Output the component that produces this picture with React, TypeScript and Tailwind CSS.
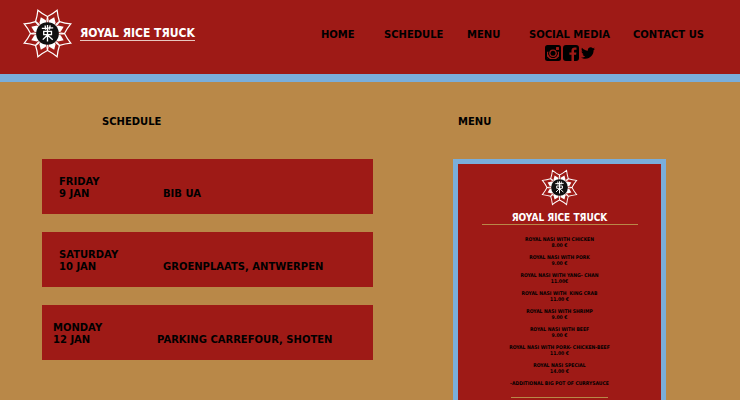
import { FaTwitter } from "react-icons/fa";

const petals = [22.5, 67.5, 112.5, 157.5, 202.5, 247.5, 292.5, 337.5];

function Logo({ className }: { className: string }) {
  return (
    <svg viewBox="-28 -28 56 56" className={className} role="img" aria-label="Royal Rice Truck logo">
      {petals.map((angle) => (
        <g key={angle} transform={`rotate(${angle})`}>
          <path
            d="M-3.8 -9.5 Q-6.6 -13 -6.8 -16.6 Q-3 -21 0 -26.6 Q3 -21 6.8 -16.6 Q6.6 -13 3.8 -9.5"
            fill="none"
            stroke="#fff"
            strokeWidth="1.3"
            strokeLinejoin="miter"
          />
          <path d="M0 -18.5 L3.7 -13.5 L3 -10.5 L-3 -10.5 L-3.7 -13.5Z" fill="#fff" />
        </g>
      ))}
      <circle r="12" fill="#101010" />
      <path
        d="M-6 -5.5L6 -6 M-2.5 -8.5L-2 -4 M2.8 -8.5L2 -4 M0 -9V8.5 M-4 -2.2H4.2V1.2H-4Z M0 1.5L-5 6.5 M0 1.5L5.5 6.5"
        fill="none"
        stroke="#fff"
        strokeWidth="1.4"
      />
    </svg>
  );
}

function InstagramIcon() {
  return (
    <svg viewBox="0 0 16 16" className="size-4" fill="none" aria-hidden="true">
      <rect width="16" height="16" rx="2.5" fill="#000" />
      <path
        d="M2 6.8H3.8A4.5 4.5 0 1 0 12.2 6.8H14V13a1 1 0 0 1-1 1H3a1 1 0 0 1-1-1Z"
        fill="#9e1a16"
      />
      <circle cx="8" cy="8.2" r="4.8" fill="#000" />
      <circle cx="8" cy="8.2" r="3.8" fill="#9e1a16" />
      <circle cx="8" cy="8.2" r="2.5" fill="#000" />
      <path d="M2 11.5V13a1 1 0 0 0 1 1H13a1 1 0 0 0 1-1V11.5L11 14H5Z" fill="#000" />
      <rect x="11" y="2" width="3" height="3" rx="0.5" fill="#9e1a16" />
    </svg>
  );
}

function FacebookIcon() {
  return (
    <svg viewBox="0 0 16 16" className="size-4" aria-hidden="true">
      <path
        d="M3 0H13A3 3 0 0 1 16 3V13A3 3 0 0 1 13 16H11V9.8H13.1L13.4 7.4H11V5.9C11 5.2 11.2 4.7 12.2 4.7H13.5V2.5C13.3 2.5 12.5 2.4 11.6 2.4C9.8 2.4 8.5 3.5 8.5 5.6V7.4H6.4V9.8H8.5V16H3A3 3 0 0 1 0 13V3A3 3 0 0 1 3 0Z"
        fill="#000"
      />
    </svg>
  );
}

const stops = [
  { day: "FRIDAY", date: "9 JAN", place: "BIB UA", pad: "pl-[17px]" },
  { day: "SATURDAY", date: "10 JAN", place: "GROENPLAATS, ANTWERPEN", pad: "pl-[17px]" },
  { day: "MONDAY", date: "12 JAN", place: "PARKING CARREFOUR, SHOTEN", pad: "pl-[11px]" },
];

const dishes = [
  ["ROYAL NASI WITH CHICKEN", "8.00 €"],
  ["ROYAL NASI WITH PORK", "9.00 €"],
  ["ROYAL NASI WITH YANG- CHAN", "11.00€"],
  ["ROYAL NASI WITH  KING CRAB", "11.00 €"],
  ["ROYAL NASI WITH SHRIMP", "9.00 €"],
  ["ROYAL NASI WITH BEEF", "9.00 €"],
  ["ROYAL NASI WITH PORK- CHICKEN-BEEF", "11.00 €"],
  ["ROYAL NASI SPECIAL", "14.00 €"],
];

export default function App() {
  return (
    <div className="flex min-h-screen flex-col bg-[#b98848] font-['DejaVu_Sans',sans-serif] text-[10px] leading-3 font-bold text-black">
      <header className="flex h-[82px] items-start border-b-8 border-[#7aaedb] bg-[#9e1a16] pr-8 pl-[21px]">
        <a href="#home" className="flex items-start gap-[6px] pt-[7px] text-white">
          <Logo className="size-[53px]" />
          <span className="mt-5 border-b border-[#e8c8c0] font-['DejaVu_Sans_Condensed','DejaVu_Sans',sans-serif] text-[12px] leading-[13px] whitespace-nowrap">
            ЯOYAL ЯICE TЯUCK
          </span>
        </a>
        <nav className="ml-auto grid grid-cols-[63px_83px_62px_104px_75px] pt-[29px] whitespace-nowrap">
          <a href="#home">HOME</a>
          <a href="#schedule">SCHEDULE</a>
          <a href="#menu">MENU</a>
          <div>
            <span>SOCIAL MEDIA</span>
            <div className="mt-1 ml-4 flex gap-[2px]">
              <a href="#instagram" aria-label="Instagram">
                <InstagramIcon />
              </a>
              <a href="#facebook" aria-label="Facebook">
                <FacebookIcon />
              </a>
              <a href="#twitter" aria-label="Twitter" className="pt-px">
                <FaTwitter className="size-[14px]" />
              </a>
            </div>
          </div>
          <a href="#contact">CONTACT US</a>
        </nav>
      </header>

      <main className="grid flex-1 grid-cols-[1fr_213px] gap-20 pt-[34px] pr-[74px] pl-[42px]">
        <section id="schedule">
          <h2 className="pl-[60px]">SCHEDULE</h2>
          <ul className="mt-[31px] flex flex-col gap-[18px]">
            {stops.map((stop) => (
              <li
                key={stop.day}
                className={`grid h-[55px] grid-cols-[104px_1fr] items-end bg-[#9e1a16] pb-[14px] ${stop.pad}`}
              >
                <div>
                  <p>{stop.day}</p>
                  <p>{stop.date}</p>
                </div>
                <p className="whitespace-nowrap">{stop.place}</p>
              </li>
            ))}
          </ul>
        </section>

        <section id="menu" className="flex flex-col">
          <h2 className="pl-[5px]">MENU</h2>
          <div className="mt-[31px] flex flex-1 flex-col items-center border-5 border-b-0 border-[#7aaedb] bg-[#9e1a16] pt-1 text-center">
            <Logo className="size-[39px]" />
            <h3 className="mt-[5px] w-[156px] border-b border-[#b98848] font-['DejaVu_Sans_Condensed','DejaVu_Sans',sans-serif] whitespace-nowrap text-white">
              ЯOYAL ЯICE TЯUCK
            </h3>
            <ul className="mt-[11px] flex flex-col gap-[6px] font-['DejaVu_Sans_Condensed','DejaVu_Sans',sans-serif] text-[5px] leading-[6px] whitespace-pre">
              {dishes.map(([name, price]) => (
                <li key={name}>
                  <p>{name}</p>
                  <p>{price}</p>
                </li>
              ))}
              <li>-ADDITIONAL BIG POT OF CURRYSAUCE</li>
            </ul>
            <hr className="mt-[11px] w-[97px] border-[#b98848]" />
          </div>
        </section>
      </main>
    </div>
  );
}
